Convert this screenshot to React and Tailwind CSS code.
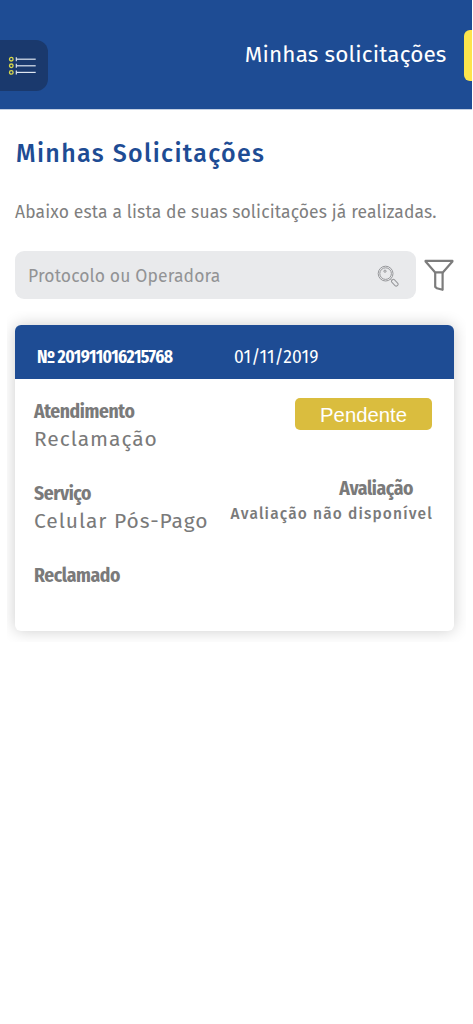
import React from 'react';

function MenuIcon() {
  return (
    <svg width="28" height="20" viewBox="0 0 28 20" fill="none">
      {[3.2, 9.8, 16.4].map((y) => (
        <g key={y}>
          <circle cx="3.3" cy={y} r="1.8" stroke="#d8d84a" strokeWidth="1.3" />
          <path d={`M8.3 ${y - 2}v4`} stroke="#e6ecf5" strokeWidth="1.1" />
          <path d={`M8.3 ${y}H27.7`} stroke="#dfe6f0" strokeWidth="1.2" />
        </g>
      ))}
    </svg>
  );
}

function SearchIcon() {
  return (
    <svg className="mt-0.5" width="22" height="22" viewBox="0 0 22 22" fill="none" stroke="#97989b" strokeWidth="1">
      <circle cx="8.6" cy="8.6" r="7.4" />
      <circle cx="8.6" cy="8.6" r="5.8" />
      <circle cx="8" cy="6.2" r="1.1" />
      <path d="M13.6 14.2l1.2 1.3" />
      <rect x="14" y="15.9" width="7.6" height="3.6" rx="1.6" transform="rotate(46 17.8 17.7)" />
    </svg>
  );
}

function FilterIcon() {
  return (
    <svg width="30" height="32" viewBox="0 0 30 32" fill="none" stroke="#7c7c7c" strokeWidth="2.2" strokeLinejoin="round">
      <path d="M1.6 1.8H28.4V2.6L18.8 13.4H11.2L1.6 2.6Z" />
      <path d="M11.2 13.4V27.8L12.8 29.2L18.6 30.8V13.4" />
    </svg>
  );
}

function Label({ children }) {
  return (
    <p className="font-['Fira_Sans_Condensed','Open_Sans_Condensed',sans-serif] text-[19.5px] leading-[27px] font-bold tracking-[-0.4px]">
      {children}
    </p>
  );
}

function Field({ label, value }) {
  return (
    <div className="text-[#7a7a7a]">
      <Label>{label}</Label>
      {value && <p className="pt-px text-[21px] leading-[27px] tracking-[0.95px]">{value}</p>}
    </div>
  );
}

export default function App() {
  return (
    <div className="min-h-screen bg-white font-['Fira_Sans','Noto_Sans',sans-serif]">
      <header className="mr-px flex h-[110px] items-center justify-end overflow-hidden border-b border-[#c3cfe2] bg-[#1e4c94]">
        <button className="mt-10 mr-auto flex h-[51px] w-12 items-center self-start rounded-r-xl bg-[#1a396d] pl-2">
          <MenuIcon />
        </button>
        <span className="text-[22.5px] tracking-[0.15px] text-white">Minhas solicitações</span>
        <div className="ml-[17.5px] mt-px h-[51px] w-2 rounded-l-md bg-[#fde44c]" />
      </header>

      <main className="px-[15px] pt-[29px]">
        <h1 className="pl-px text-[25px] leading-[30px] font-medium tracking-[1.35px] text-[#1e4c94]">Minhas Solicitações</h1>
        <p className="mt-8 text-[17.5px] leading-6 tracking-[0.12px] whitespace-nowrap text-[#7f7f7f]">
          Abaixo esta a lista de suas solicitações já realizadas.
        </p>

        <div className="mt-[26px] flex items-center gap-2">
          <div className="flex h-12 w-[401px] items-center justify-between rounded-[9px] bg-[#e9eaec] pr-[17px] pl-[13px]">
            <span className="pt-[3px] text-[17.5px] leading-6 tracking-[0.12px] text-[#929395]">Protocolo ou Operadora</span>
            <SearchIcon />
          </div>
          <FilterIcon />
        </div>

        <div className="-mx-2 mt-3 overflow-hidden px-2 pt-[14px] pb-[11px]">
          <article className="h-[306px] w-[439px] overflow-hidden rounded-md bg-white shadow-[0_0_16px_rgba(0,0,0,0.2)]">
            <div className="flex h-[54px] items-baseline bg-[#1e4c94] pt-[21px] pl-[22px] text-white">
              <span className="w-[197px] font-['Fira_Sans_Condensed','Open_Sans_Condensed',sans-serif] text-[17.5px] leading-6 font-bold tracking-[-0.5px]">
                Nº 201911016215768
              </span>
              <span className="text-[17.5px] leading-6 tracking-[0.15px]">01/11/2019</span>
            </div>
            <div className="flex justify-between pt-[19px] pr-[22px] pl-[19px]">
              <div className="flex flex-col gap-[27px]">
                <Field label="Atendimento" value="Reclamação" />
                <Field label="Serviço" value="Celular Pós-Pago" />
                <Field label="Reclamado" />
              </div>
              <div className="flex flex-col items-end text-[#7a7a7a]">
                <span className="flex h-8 w-[137px] items-center justify-center rounded-[5px] bg-[#dabd3e] pt-0.5 font-['Liberation_Sans',sans-serif] text-[20.3px] text-white">
                  Pendente
                </span>
                <div className="mt-[45px] pr-[19px]">
                  <Label>Avaliação</Label>
                </div>
                <p className="-mr-px pt-px text-[15.5px] leading-[22px] font-medium tracking-[1.15px]">Avaliação não disponível</p>
              </div>
            </div>
          </article>
        </div>
      </main>
    </div>
  );
}
